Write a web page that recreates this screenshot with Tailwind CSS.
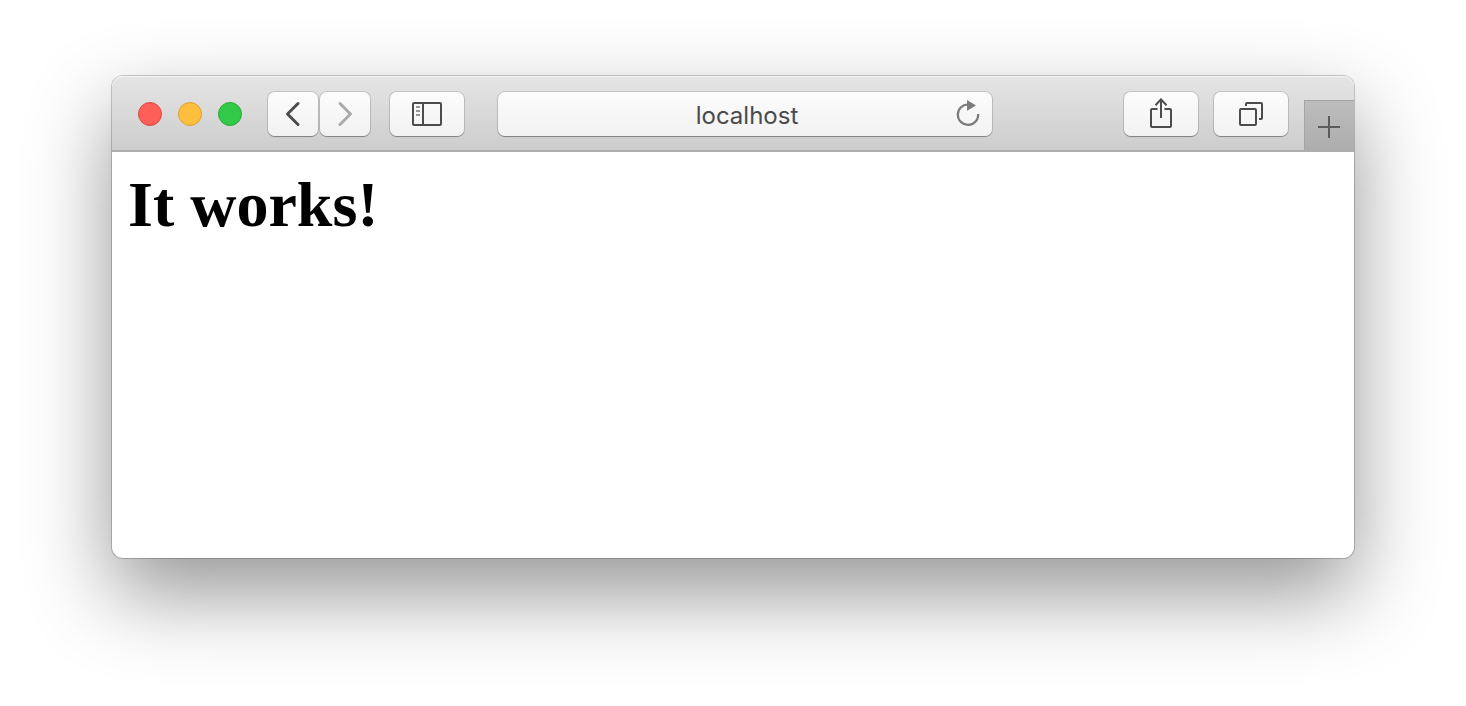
<!DOCTYPE html>
<html lang="en">
<head>
<meta charset="utf-8">
<title>localhost</title>
<script src="https://cdn.jsdelivr.net/npm/@tailwindcss/browser@4"></script>
</head>
<body class="flex min-h-screen flex-col bg-white px-28 pt-[76px] pb-[148px]">
<div class="flex flex-1 flex-col rounded-[11px] bg-white shadow-[0_0_0_1px_rgba(0,0,0,0.2),0_35px_84px_rgba(0,0,0,0.42)]">
  <header class="flex h-[76px] items-start rounded-t-[11px] border-b-2 border-[#aeaeae] bg-linear-to-b from-[#e5e5e5] to-[#cdcdcd] pt-4 pl-[26px] shadow-[inset_0_1px_0_#f4f4f4]">
    <div class="flex h-11 items-center gap-4">
      <button aria-label="Close" class="size-6 rounded-full border border-[#e2463f] bg-[#fe5f58]"></button>
      <button aria-label="Minimize" class="size-6 rounded-full border border-[#dfa033] bg-[#febe3e]"></button>
      <button aria-label="Zoom" class="size-6 rounded-full border border-[#27ab36] bg-[#33c948]"></button>
    </div>
    <nav class="ml-[26px] flex gap-0.5">
      <button aria-label="Back" class="flex h-11 w-[50px] items-center justify-center rounded-[7px] bg-linear-to-b from-[#fcfcfc] to-[#f2f2f2] shadow-[0_0_0_1px_rgba(0,0,0,0.12),0_1px_1px_rgba(0,0,0,0.3)]">
        <svg class="h-7 w-6" viewBox="0 0 24 28" fill="none" stroke="#4c4c4c" stroke-width="3" stroke-linecap="round" stroke-linejoin="round"><path d="M17 3.500 6.500 14 17 24.500"/></svg>
      </button>
      <button aria-label="Forward" class="flex h-11 w-[50px] items-center justify-center rounded-[7px] bg-linear-to-b from-[#fcfcfc] to-[#f2f2f2] shadow-[0_0_0_1px_rgba(0,0,0,0.12),0_1px_1px_rgba(0,0,0,0.3)]">
        <svg class="h-7 w-6" viewBox="0 0 24 28" fill="none" stroke="#aaa" stroke-width="3" stroke-linecap="round" stroke-linejoin="round"><path d="M7 3.500 17.500 14 7 24.500"/></svg>
      </button>
    </nav>
    <button aria-label="Show sidebar" class="ml-5 flex h-11 w-[74px] items-center justify-center rounded-[7px] bg-linear-to-b from-[#fcfcfc] to-[#f2f2f2] shadow-[0_0_0_1px_rgba(0,0,0,0.12),0_1px_1px_rgba(0,0,0,0.3)]">
      <svg class="h-6 w-[30px]" viewBox="0 0 30 24" fill="none" stroke="#4c4c4c" stroke-width="2"><rect x="1" y="1" width="28" height="22" rx="1"/><path d="M11 1v22"/><path d="M4 5h4M4 9h4M4 13h4" stroke="#777" stroke-width="1.600"/></svg>
    </button>
    <div class="relative mr-[132px] ml-[34px] flex-1">
      <input aria-label="Address" type="text" value="localhost" class="block h-11 w-full rounded-[7px] bg-linear-to-b from-[#fcfcfc] to-[#f2f2f2] pt-0.5 pl-1 text-center font-['Inter','Liberation_Sans',sans-serif] text-2xl text-[#4a4a4a] shadow-[0_0_0_1px_rgba(0,0,0,0.12),0_1px_1px_rgba(0,0,0,0.3)] outline-none">
      <button aria-label="Reload" class="absolute top-2 right-3 h-7 w-6">
        <svg class="h-7 w-6" viewBox="0 0 24 28" fill="none"><path d="M12 4.500A10.200 10.200 0 1 0 22.200 14" stroke="#7b7b7b" stroke-width="2.200"/><path d="M11 0v10.800L20 5.400Z" fill="#7b7b7b"/></svg>
      </button>
    </div>
    <div class="flex gap-4">
      <button aria-label="Share" class="flex h-11 w-[74px] items-center justify-center rounded-[7px] bg-linear-to-b from-[#fcfcfc] to-[#f2f2f2] shadow-[0_0_0_1px_rgba(0,0,0,0.12),0_1px_1px_rgba(0,0,0,0.3)]">
        <svg class="h-8 w-6" viewBox="0 0 24 32" fill="none" stroke="#4c4c4c" stroke-width="2"><path d="M8.500 11H3q-1 0-1 1v16q0 1 1 1h18q1 0 1-1V12q0-1-1-1h-5.500"/><path d="M12 20V1M6.500 7.200 12 1.400l5.500 5.800"/></svg>
      </button>
      <button aria-label="Show all tabs" class="flex h-11 w-[74px] items-center justify-center rounded-[7px] bg-linear-to-b from-[#fcfcfc] to-[#f2f2f2] shadow-[0_0_0_1px_rgba(0,0,0,0.12),0_1px_1px_rgba(0,0,0,0.3)]">
        <svg class="size-6" viewBox="0 0 24 24" fill="none" stroke="#4c4c4c" stroke-width="2"><rect x="1" y="7" width="16" height="16" rx="1"/><path d="M7 4V2q0-1 1-1h14q1 0 1 1v14q0 1-1 1h-2"/></svg>
      </button>
    </div>
    <button aria-label="New tab" class="ml-4 flex h-[50px] w-[50px] items-center justify-center self-end border-t border-l border-[#a5a5a5] bg-linear-to-b from-[#bdbdbd] to-[#adadad]">
      <svg class="size-6" viewBox="0 0 24 24" stroke="#5c5c5c" stroke-width="2"><path d="M11 2v22M0 13h22"/></svg>
    </button>
  </header>
  <main class="flex-1 px-4 pt-4">
    <h1 class="font-['Liberation_Serif',serif] text-[64px] leading-[74px] font-bold text-black">It works!</h1>
  </main>
</div>
</body>
</html>
